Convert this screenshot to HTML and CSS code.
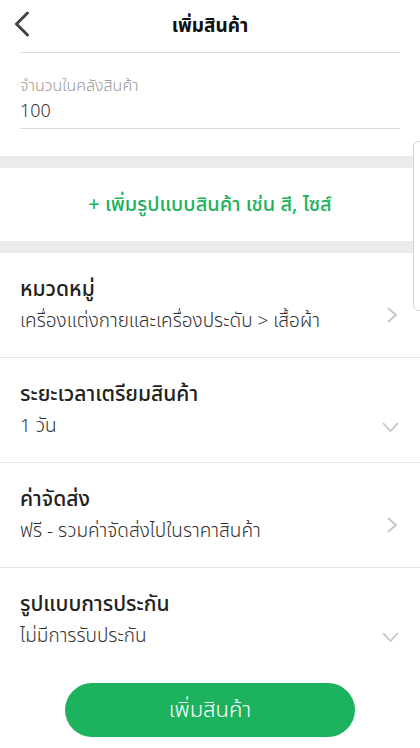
FILE: index.html
```html
<!DOCTYPE html>
<html lang="th">
<head>
    <meta charset="UTF-8">
    <meta name="viewport" content="width=device-width, initial-scale=1.0">
    <title>เพิ่มสินค้า</title>
    <link rel="stylesheet" href="styles.css">
</head>
<body>

    <div class="header">
        <button class="back-btn" aria-label="กลับ">
            <svg width="16" height="26" viewBox="0 0 16 26">
                <path d="M13.5 2 L2.5 13 L13.5 24" fill="none" stroke="#444" stroke-width="3" stroke-linecap="round" stroke-linejoin="round"/>
            </svg>
        </button>
        <h1>เพิ่มสินค้า</h1>
    </div>

    <div class="field-section">
        <div class="field">
            <label>จำนวนในคลังสินค้า</label>
            <div class="field-value">100</div>
        </div>
    </div>

    <div class="band"></div>

    <div class="add-variant">+ เพิ่มรูปแบบสินค้า เช่น สี, ไซส์</div>

    <div class="band"></div>

    <div class="option-row">
        <div class="option-text">
            <div class="option-title">หมวดหมู่</div>
            <div class="option-value">เครื่องแต่งกายและเครื่องประดับ &gt; เสื้อผ้า</div>
        </div>
        <svg class="chev" width="12" height="16" viewBox="0 0 12 16">
            <path d="M2 1 L10 8 L2 15" fill="none" stroke="#c4c4c4" stroke-width="1.8"/>
        </svg>
    </div>

    <div class="option-row">
        <div class="option-text">
            <div class="option-title">ระยะเวลาเตรียมสินค้า</div>
            <div class="option-value">1 วัน</div>
        </div>
        <svg class="chev-down" width="17" height="12" viewBox="0 0 17 12">
            <path d="M1 2 L8.5 10 L16 2" fill="none" stroke="#c4c4c4" stroke-width="1.8"/>
        </svg>
    </div>

    <div class="option-row">
        <div class="option-text">
            <div class="option-title">ค่าจัดส่ง</div>
            <div class="option-value">ฟรี - รวมค่าจัดส่งไปในราคาสินค้า</div>
        </div>
        <svg class="chev" width="12" height="16" viewBox="0 0 12 16">
            <path d="M2 1 L10 8 L2 15" fill="none" stroke="#c4c4c4" stroke-width="1.8"/>
        </svg>
    </div>

    <div class="option-row last">
        <div class="option-text">
            <div class="option-title">รูปแบบการประกัน</div>
            <div class="option-value">ไม่มีการรับประกัน</div>
        </div>
        <svg class="chev-down" width="17" height="12" viewBox="0 0 17 12">
            <path d="M1 2 L8.5 10 L16 2" fill="none" stroke="#c4c4c4" stroke-width="1.8"/>
        </svg>
    </div>

    <div class="footer">
        <button class="submit-btn">เพิ่มสินค้า</button>
    </div>

    <div class="scroll-thumb"></div>

</body>
</html>
```

FILE: styles.css
```css
body {
    font-family: "Noto Sans Thai", "Noto Sans", "DejaVu Sans", sans-serif;
    background-color: #fff;
    margin: 0;
    padding: 0;
    color: #222;
    width: 420px;
    height: 748px;
    overflow: hidden;
    position: relative;
}

.header {
    height: 52px;
    margin: 0 20px;
    border-bottom: 1px solid #dcdcdc;
    display: flex;
    align-items: center;
    justify-content: center;
    position: relative;
}

.back-btn {
    position: absolute;
    left: -6px;
    top: 11px;
    background: none;
    border: none;
    padding: 0;
}

h1 {
    margin: 0;
    font-size: 19px;
    font-weight: 700;
    color: #111;
}

.field-section {
    padding: 21px 20px 27px;
}

.field {
    border-bottom: 1px solid #dcdcdc;
    padding-bottom: 2px;
}

.field label {
    display: block;
    font-size: 16px;
    font-weight: 300;
    color: #9a9a9a;
    line-height: 24px;
}

.field-value {
    font-size: 18px;
    font-weight: 300;
    line-height: 28px;
    color: #333;
}

.band {
    height: 12px;
    background-color: #ebebed;
}

.add-variant {
    height: 73px;
    display: flex;
    align-items: center;
    justify-content: center;
    color: #1db25e;
    font-size: 20px;
    font-weight: 500;
}

.option-row {
    display: flex;
    align-items: center;
    padding: 0 20px;
    height: 104px;
    border-bottom: 1px solid #e6e6e6;
}

.option-row.last {
    border-bottom: none;
}

.option-text {
    flex: 1;
}

.option-title {
    font-size: 21px;
    font-weight: 500;
    color: #222;
    line-height: 32px;
}

.option-value {
    font-size: 19px;
    font-weight: 300;
    color: #333;
    line-height: 31px;
}

.chev {
    margin-top: 20px;
    margin-right: 2px;
}

.chev-down {
    margin-top: 34px;
    margin-right: 1px;
}

.footer {
    display: flex;
    justify-content: center;
    padding-top: 11px;
}

.submit-btn {
    width: 290px;
    height: 54px;
    border: none;
    border-radius: 27px;
    background-color: #1db25e;
    color: #fff;
    font-family: inherit;
    font-size: 22px;
    font-weight: 300;
}

.scroll-thumb {
    position: absolute;
    left: 413px;
    top: 141px;
    width: 14px;
    height: 168px;
    border: 1px solid #d6d6d6;
    border-radius: 6px;
    background: #fff;
}
```
